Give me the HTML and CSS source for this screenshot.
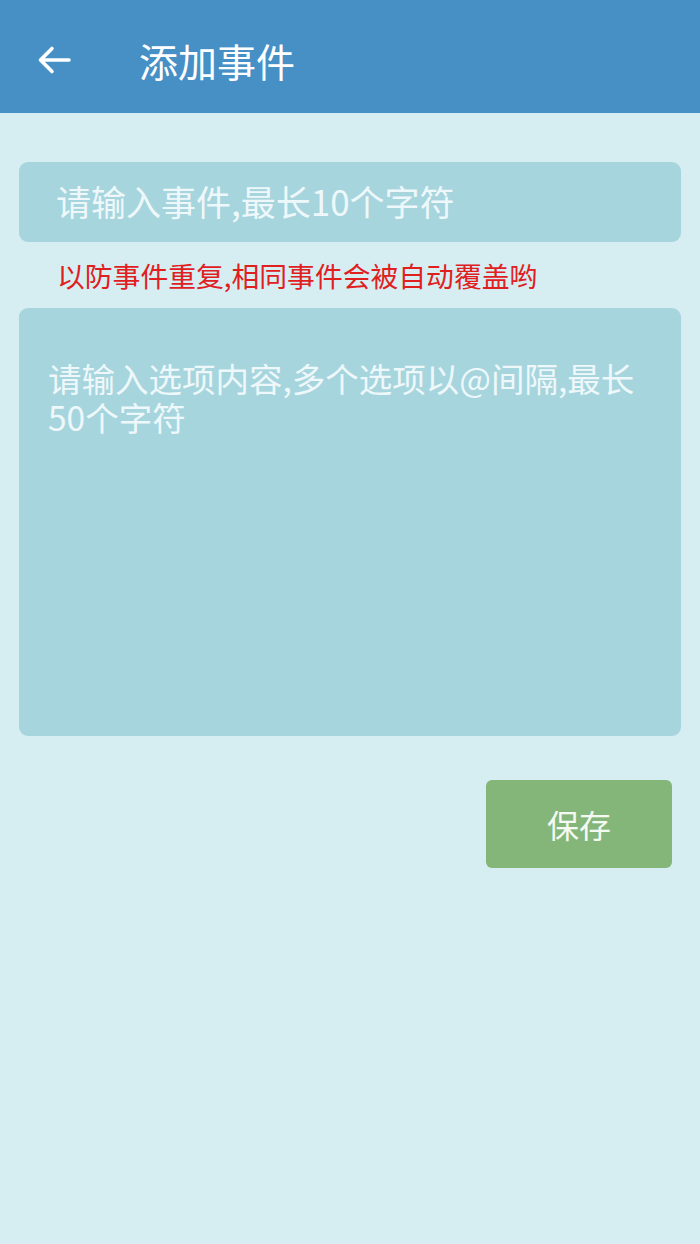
FILE: index.html
```html
<!DOCTYPE html>
<html lang="zh-CN">
<head>
  <meta charset="UTF-8" />
  <title>添加事件</title>
  <link rel="stylesheet" href="styles.css">
</head>
<body>
  <div class="toolbar">
    <span class="back">
      <svg width="34" height="30" viewBox="0 0 34 30">
        <path d="M32 15 H4 M15 3.5 L3.5 15 L15 26.5" fill="none" stroke="#fff" stroke-width="3.6" stroke-linecap="round" stroke-linejoin="round" />
      </svg>
    </span>
    <h1>添加事件</h1>
  </div>

  <div class="content">
    <div class="field event-name">请输入事件,最长10个字符</div>
    <p class="tip">以防事件重复,相同事件会被自动覆盖哟</p>
    <div class="field options">请输入选项内容,多个选项以@间隔,最长50个字符</div>

    <div class="actions">
      <button class="save-btn">保存</button>
    </div>
  </div>
</body>
</html>
```

FILE: styles.css
```css
html, body {
  margin: 0;
  padding: 0;
  height: 100%;
  font-family: "Noto Sans CJK SC", "Noto Sans", sans-serif;
  background: #d6eef2;
}

.toolbar {
  height: 113px;
  background: #4690c6;
  display: flex;
  align-items: center;
  padding-left: 37px;
  box-sizing: border-box;
}

.back {
  display: flex;
  width: 34px;
  height: 30px;
  margin-top: 6px;
}

.toolbar h1 {
  margin: 7px 0 0 68px;
  font-size: 39px;
  font-weight: 400;
  color: #fff;
  line-height: 1;
}

.content {
  padding: 49px 19px 0;
}

.field {
  background: #a6d5de;
  border-radius: 9px;
  color: #eef8fa;
  box-sizing: border-box;
}

.event-name {
  height: 80px;
  line-height: 78px;
  padding-left: 37px;
  font-size: 35px;
}

.tip {
  margin: 0;
  height: 66px;
  line-height: 66px;
  padding-left: 38px;
  font-size: 27.8px;
  color: #e0201f;
}

.options {
  height: 428px;
  padding: 50px 40px 0 29px;
  line-height: 39px;
  font-size: 33.5px;
}

.actions {
  display: flex;
  justify-content: flex-end;
  padding-right: 9px;
  margin-top: 44px;
}

.save-btn {
  width: 186px;
  height: 88px;
  background: #84b67a;
  color: #f4faf2;
  font-family: "Noto Sans CJK SC", sans-serif;
  font-size: 32px;
  border: none;
  border-radius: 6px;
  cursor: pointer;
  padding: 0;
}
```
